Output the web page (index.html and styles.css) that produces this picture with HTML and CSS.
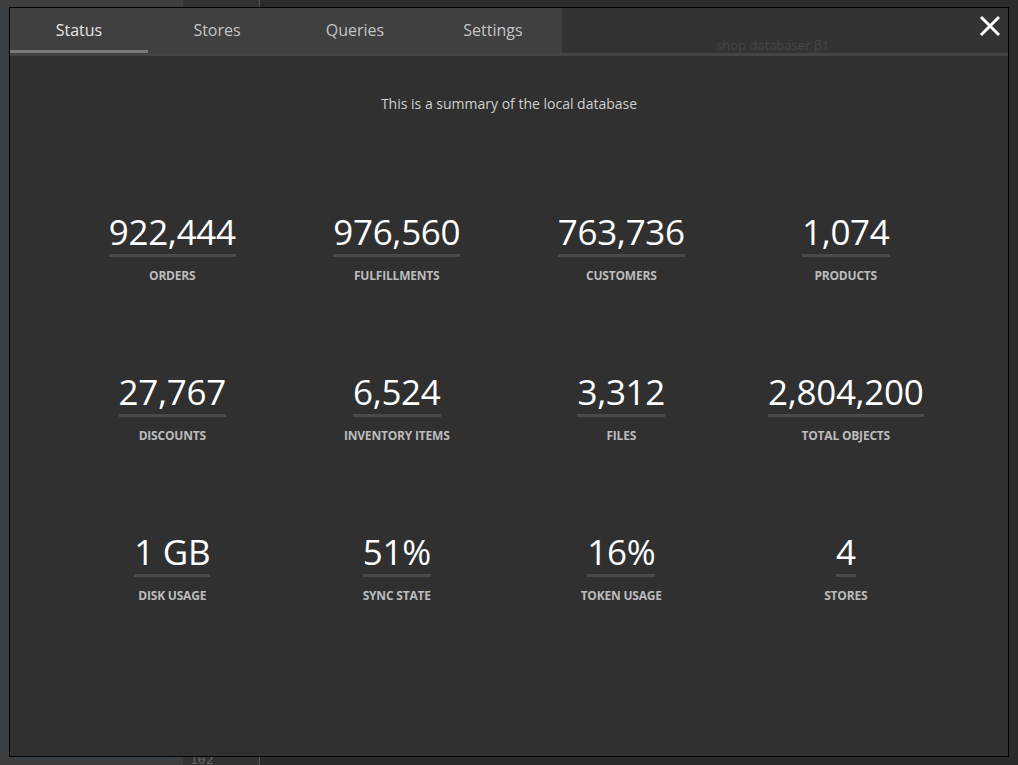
FILE: index.html
```html
<!DOCTYPE html>
<html>
<head>
<meta charset="utf-8">
<link rel="stylesheet" href="styles.css">
</head>
<body>
<div class="backdrop">
  <div class="gutter"><span class="lineno">102</span></div>
</div>
<div class="modal">
  <div class="tabbar">
    <div class="tab active">Status</div>
    <div class="tab">Stores</div>
    <div class="tab">Queries</div>
    <div class="tab">Settings</div>
    <div class="filler"><span class="apptitle">shop databaser β1</span></div>
  </div>
  <button class="close" aria-label="Close">
    <svg width="22" height="22" viewBox="0 0 22 22"><path d="M2 2 L20 20 M20 2 L2 20" stroke="#fff" stroke-width="3" fill="none"/></svg>
  </button>
  <div class="content">
    <p class="subtitle">This is a summary of the local database</p>
    <div class="stats">
      <div class="stat"><span class="num">922,444</span><span class="label">ORDERS</span></div>
      <div class="stat"><span class="num">976,560</span><span class="label">FULFILLMENTS</span></div>
      <div class="stat"><span class="num">763,736</span><span class="label">CUSTOMERS</span></div>
      <div class="stat"><span class="num">1,074</span><span class="label">PRODUCTS</span></div>
      <div class="stat"><span class="num">27,767</span><span class="label">DISCOUNTS</span></div>
      <div class="stat"><span class="num">6,524</span><span class="label">INVENTORY ITEMS</span></div>
      <div class="stat"><span class="num">3,312</span><span class="label">FILES</span></div>
      <div class="stat"><span class="num">2,804,200</span><span class="label">TOTAL OBJECTS</span></div>
      <div class="stat"><span class="num">1 GB</span><span class="label">DISK USAGE</span></div>
      <div class="stat"><span class="num">51%</span><span class="label">SYNC STATE</span></div>
      <div class="stat"><span class="num">16%</span><span class="label">TOKEN USAGE</span></div>
      <div class="stat"><span class="num">4</span><span class="label">STORES</span></div>
    </div>
  </div>
</div>
</body>
</html>
```
FILE: styles.css
```css
* { box-sizing: border-box; }
html, body {
  margin: 0;
  padding: 0;
  width: 1018px;
  height: 765px;
  overflow: hidden;
  font-family: "Open Sans", "Noto Sans", "DejaVu Sans", sans-serif;
}
body {
  background: linear-gradient(to right, #3c3f41 0, #3c3f41 183px, #313335 183px, #313335 259px, #555 259px, #555 260px, #2b2b2b 260px);
}
.backdrop {
  width: 100%;
  height: 100%;
}
.gutter {
  position: absolute;
  left: 190px;
  top: 752px;
  font-family: "DejaVu Sans Mono", monospace;
  font-size: 13px;
  color: #666;
}
.modal {
  position: absolute;
  left: 9px;
  top: 7px;
  width: 1000px;
  height: 750px;
  border: 1px solid #000;
  background: #303030;
  display: flex;
  flex-direction: column;
}
.tabbar {
  display: flex;
  height: 48px;
  border-bottom: 3px solid #444;
  flex-shrink: 0;
}
.tab {
  width: 138px;
  height: 45px;
  background: #404040;
  color: #c4c4c4;
  font-size: 16px;
  display: flex;
  align-items: center;
  justify-content: center;
  padding-bottom: 1px;
}
.tab.active {
  color: #e6e6e6;
  border-bottom: 3px solid #7a7a7a;
  padding-top: 2px;
}
.filler {
  flex: 1;
  height: 45px;
  background: #333;
  display: flex;
  align-items: flex-end;
  padding-left: 154px;
}
.apptitle {
  font-size: 13px;
  color: #454545;
  line-height: 18px;
  margin-bottom: -1px;
}
.close {
  position: absolute;
  right: 7px;
  top: 7px;
  width: 22px;
  height: 22px;
  padding: 0;
  border: none;
  background: none;
}
.content {
  flex: 1;
  padding: 38px 50px 0;
}
.subtitle {
  margin: 0;
  text-align: center;
  font-size: 14px;
  line-height: 20px;
  color: #cfcfcf;
}
.stats {
  display: grid;
  grid-template-columns: repeat(4, 1fr);
  row-gap: 86px;
  margin-top: 96px;
}
.stat {
  display: flex;
  flex-direction: column;
  align-items: center;
}
.num {
  font-size: 35px;
  line-height: 44px;
  color: #fff;
  border-bottom: 3px solid #4a4a4a;
  letter-spacing: -0.3px;
}
.label {
  margin-top: 11px;
  font-size: 12px;
  line-height: 16px;
  font-weight: 700;
  color: #bcbcbc;
  letter-spacing: -0.2px;
}
```
